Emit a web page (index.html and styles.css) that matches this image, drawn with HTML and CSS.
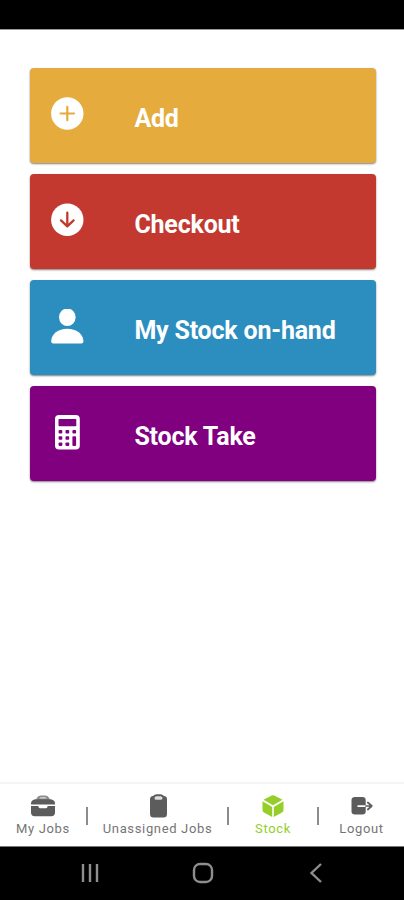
FILE: index.html
```html
<!DOCTYPE html>
<html lang="en">

<head>
  <meta charset="UTF-8" />
  <meta name="viewport" content="width=device-width, initial-scale=1.0" />
  <title>Stock</title>
  <link rel="stylesheet" href="styles.css">
</head>

<body>
  <div class="screen">
    <div class="status-bar"></div>

    <main class="menu">
      <button class="card card-add">
        <svg class="card-icon" viewBox="0 0 34 38">
          <circle cx="17.3" cy="16.5" r="16.2" fill="#fff" />
          <path d="M17.3 9.8v13.4M10.6 16.5h13.4" fill="none" stroke="currentColor" stroke-width="2.2" stroke-linecap="round" />
        </svg>
        <span>Add</span>
      </button>

      <button class="card card-checkout">
        <svg class="card-icon" viewBox="0 0 34 38">
          <circle cx="17.3" cy="16.7" r="16.2" fill="#fff" />
          <path d="M17.3 9.7v13M11 17.4l6.3 6 6.3-6" fill="none" stroke="currentColor" stroke-width="2.3" stroke-linecap="round" stroke-linejoin="round" />
        </svg>
        <span>Checkout</span>
      </button>

      <button class="card card-onhand">
        <svg class="card-icon" viewBox="0 0 34 38" fill="#fff">
          <ellipse cx="17.3" cy="8.3" rx="8.3" ry="8.8" />
          <path d="M1.2 32.2C1.2 25 8.3 19.7 17.3 19.7s16.1 5.3 16.1 12.5q0 2.2-2 2.2H3.2q-2 0-2-2.2z" />
        </svg>
        <span>My Stock on-hand</span>
      </button>

      <button class="card card-take">
        <svg class="card-icon" viewBox="0 0 34 38">
          <rect x="5" y="0" width="24.8" height="34.6" rx="4" fill="#fff" />
          <g fill="currentColor">
            <rect x="8.5" y="4" width="17.8" height="7.3" rx="0.8" />
            <rect x="8.6" y="15" width="3.7" height="3.5" rx="0.9" />
            <rect x="15.5" y="15" width="3.7" height="3.5" rx="0.9" />
            <rect x="22.4" y="15" width="3.7" height="3.5" rx="0.9" />
            <rect x="8.6" y="21.2" width="3.7" height="3.5" rx="0.9" />
            <rect x="15.5" y="21.2" width="3.7" height="3.5" rx="0.9" />
            <rect x="8.6" y="27.4" width="3.7" height="3.5" rx="0.9" />
            <rect x="15.5" y="27.4" width="3.7" height="3.5" rx="0.9" />
            <rect x="22.4" y="21.2" width="3.7" height="9.7" rx="0.9" />
          </g>
        </svg>
        <span>Stock Take</span>
      </button>
    </main>

    <nav class="tabs">
      <a class="tab">
        <svg class="tab-icon" viewBox="0 0 26 24" fill="currentColor">
          <path d="M6.5 6V4.5Q8 1.4 10.5 1.4h5Q18 1.4 19.500 4.500V6z" opacity="0.7" />
          <path d="M9.500 4.500q.5-1.200 1.700-1.200h3.600q1.200 0 1.700 1.200z" fill="#ddd" />
          <path d="M5 5.200h16q4 1 4 4.300v1H1v-1q0-3.300 4-4.300z" />
          <path d="M1 12h7.500v.8q0 1.400 1.500 1.400h6q1.500 0 1.500-1.400V12H25v6.500q0 3.700-3.700 3.700H4.700Q1 22.200 1 18.500z" />
        </svg>
        <span>My Jobs</span>
      </a>
      <i class="divider"></i>
      <a class="tab">
        <svg class="tab-icon" viewBox="0 0 26 24" fill="currentColor">
          <path d="M8 2Q9.500.3 11.500.3h4q2 0 3.500 1.700 3 0 3 3.500V20q0 3.500-3.500 3.500h-10Q5 23.500 5 20V5.500Q5 2 8 2z" />
          <path d="M9.500 3.500L11 2.300h5l1.500 1.200q.3 2.200-1.500 2.200h-5q-1.800 0-1.500-2.200z" fill="#ddd" />
        </svg>
        <span>Unassigned Jobs</span>
      </a>
      <i class="divider"></i>
      <a class="tab active">
        <svg class="tab-icon" viewBox="0 0 26 24" fill="currentColor">
          <path d="M3.500 5.800L11.700 1.600q1.300-.7 2.600 0l8.200 4.200L13 11.200z" />
          <path d="M2.500 7.300L12.200 12.900v10L4 18.500q-1.500-.8-1.500-2.500z" />
          <path d="M23.500 7.300L13.800 12.900v10l8.200-4.400q1.500-.8 1.500-2.500z" />
        </svg>
        <span>Stock</span>
      </a>
      <i class="divider"></i>
      <a class="tab">
        <svg class="tab-icon" viewBox="0 0 26 24" fill="currentColor">
          <path d="M6 3h7.500q3.200 0 3.200 3v5.200H8.500v1.700h8.200v4.600q0 3-3.200 3H6q-3.500 0-3.500-3V6Q2.500 3 6 3z" />
          <path d="M17 12h5.500M18.800 8.500l4 3.500-4 3.500" fill="none" stroke="currentColor" stroke-width="1.7" stroke-linecap="round" stroke-linejoin="round" />
        </svg>
        <span>Logout</span>
      </a>
    </nav>

    <div class="system-nav">
      <svg class="system-icon" viewBox="0 0 24 24">
        <path d="M5 3v18M12 3v18M19 3v18" />
      </svg>
      <svg class="system-icon" viewBox="0 0 24 24">
        <rect x="3" y="3" width="18" height="18" rx="6" />
      </svg>
      <svg class="system-icon" viewBox="0 0 24 24">
        <path d="M17 3L7.500 12l9.500 9" />
      </svg>
    </div>
  </div>
</body>

</html>
```
FILE: styles.css
```css
:root {
  --add: #e5ab3d;
  --checkout: #c3392f;
  --onhand: #2b8ebf;
  --take: #800080;
  --active: #95ce28;
  --icon: #5c5c5c;
  --text: #757575;
}

* {
  margin: 0;
  padding: 0;
  box-sizing: border-box;
}

body {
  font-family: Roboto, sans-serif;
  background-color: #fff;
}

.screen {
  display: flex;
  flex-direction: column;
  height: 900px;
}

.status-bar {
  height: 30px;
  background-color: #000;
  border-bottom: 1px solid #999;
}

.menu {
  flex: 1;
  display: flex;
  flex-direction: column;
  gap: 11px;
  padding: 38px 28px 0 30px;
}

.card {
  display: flex;
  align-items: center;
  height: 95px;
  padding-left: 20px;
  padding-top: 6px;
  border: none;
  border-radius: 4px;
  box-shadow: 0 1px 2px rgba(0, 0, 0, 0.5);
  font-family: inherit;
  font-size: 25px;
  font-weight: 700;
  letter-spacing: -0.2px;
}

.card span {
  color: #fff;
}

.card-icon {
  width: 34px;
  height: 38px;
  margin-right: 50.4px;
  margin-bottom: 6px;
}

.card-add {
  background-color: var(--add);
  color: var(--add);
}

.card-checkout {
  background-color: var(--checkout);
  color: var(--checkout);
}

.card-onhand {
  background-color: var(--onhand);
  color: var(--onhand);
}

.card-take {
  background-color: var(--take);
  color: var(--take);
}

.tabs {
  display: grid;
  grid-template-columns: 86px 2px 139px 2px 88px 2px 1fr;
  height: 65px;
  padding-top: 10px;
  border-top: 2px solid #f4f4f4;
  border-bottom: 1px solid #777;
}

.tab {
  display: flex;
  flex-direction: column;
  align-items: center;
  color: var(--icon);
  font-size: 13px;
  line-height: 16px;
  letter-spacing: 0.65px;
  white-space: nowrap;
}

.tab span {
  color: var(--text);
}

.tab-icon {
  width: 26px;
  height: 24px;
  margin-bottom: 3px;
}

.tab.active,
.tab.active span {
  color: var(--active);
}

.divider {
  height: 18px;
  margin-top: 13px;
  background-color: #8c8c8c;
}

.system-nav {
  display: flex;
  justify-content: center;
  gap: 89px;
  height: 53px;
  padding-top: 14px;
  padding-left: 2px;
  background-color: #000;
}

.system-icon {
  width: 24px;
  height: 24px;
  fill: none;
  stroke: #8e8e8e;
  stroke-width: 2.4;
}
```
